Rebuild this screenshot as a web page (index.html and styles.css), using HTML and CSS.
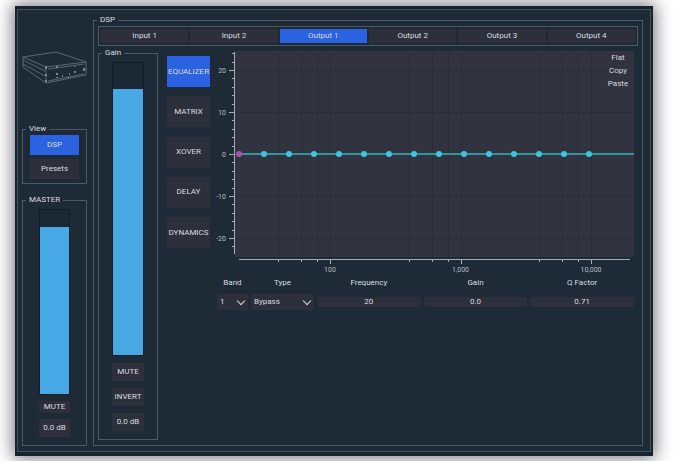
FILE: index.html
```html
<!DOCTYPE html>
<html lang="en">
<head>
  <meta charset="UTF-8">
  <meta name="viewport" content="width=device-width, initial-scale=1.0">
  <title>DSP</title>
  <link rel="stylesheet" href="styles.css">
</head>
<body>

  <div class="window">

    <!-- Left column -->
    <aside class="sidebar">
      <svg class="device" viewBox="0 0 65 34" aria-hidden="true">
        <path class="case" d="M1 6 L34 1 L64 11 L64 24 L24 32 L1 16 Z M1 6 L24 16 L64 11 M24 16 V32 M1 9 L23 20 M1 13 L23 25 M26 18 L62 13 M26 30 L62 23"/>
        <path class="knobs" d="M23 15h2v3h-2z M23 23h2v2h-2z M23 29h2v2h-2z M34 15h2v2h-2z M34 22h2v2h-2z M34 26h2v1h-2z M40 24h1v2h-1z M47 22h1v2h-1z M52 20h2v2h-2z M52 15h1v1h-1z M61 17h2v3h-2z M46 26h1v1h-1z"/>
      </svg>

      <fieldset class="panel view">
        <legend>View</legend>
        <button class="btn active">DSP</button>
        <button class="btn">Presets</button>
      </fieldset>

      <fieldset class="panel channel master">
        <legend>MASTER</legend>
        <input type="range" class="fader fader-master" min="0" max="100" value="91" aria-label="Master level">
        <button class="btn btn-low">MUTE</button>
        <button class="btn">0.0 dB</button>
      </fieldset>
    </aside>

    <!-- DSP -->
    <fieldset class="panel dsp">
      <legend>DSP</legend>

      <nav class="tabs">
        <button class="btn">Input 1</button>
        <button class="btn">Input 2</button>
        <button class="btn active">Output 1</button>
        <button class="btn">Output 2</button>
        <button class="btn">Output 3</button>
        <button class="btn">Output 4</button>
      </nav>

      <div class="content">
        <fieldset class="panel channel gain">
          <legend>Gain</legend>
          <input type="range" class="fader fader-gain" min="0" max="100" value="90" aria-label="Gain level">
          <button class="btn">MUTE</button>
          <button class="btn">INVERT</button>
          <button class="btn">0.0 dB</button>
        </fieldset>

        <nav class="modules">
          <button class="btn active">EQUALIZER</button>
          <button class="btn">MATRIX</button>
          <button class="btn">XOVER</button>
          <button class="btn">DELAY</button>
          <button class="btn">DYNAMICS</button>
        </nav>

        <main class="equalizer">
          <div class="chart">
            <svg id="curve" viewBox="0 0 424 228" role="img" aria-label="Equalizer curve">
              <rect class="plot" x="21" y="3" width="399" height="206"/>
            </svg>
            <div class="chart-menu">
              <button>Flat</button>
              <button>Copy</button>
              <button>Paste</button>
            </div>
          </div>

          <form class="band">
            <div class="field">
              <label for="band">Band</label>
              <div class="select">
                <select id="band"><option>1</option><option>2</option><option>3</option></select>
              </div>
            </div>
            <div class="field">
              <label for="type">Type</label>
              <div class="select">
                <select id="type"><option>Bypass</option><option>Peak</option></select>
              </div>
            </div>
            <div class="field">
              <label for="frequency">Frequency</label>
              <input type="text" id="frequency" value="20">
            </div>
            <div class="field">
              <label for="gain">Gain</label>
              <input type="text" id="gain" value="0.0">
            </div>
            <div class="field">
              <label for="q">Q Factor</label>
              <input type="text" id="q" value="0.71">
            </div>
          </form>
        </main>
      </div>
    </fieldset>

  </div>

  <script src="script.js"></script>
</body>
</html>
```
FILE: styles.css
```css
* { box-sizing: border-box; }
body { margin: 0; padding: 6px 23px 5px 15px; height: 100vh; min-height: 440px; background: #fff; font-family: Roboto, sans-serif; font-size: 8px; line-height: 10px; color: #d8dce0; }
button, input, select { font: inherit; color: inherit; margin: 0; padding: 0; border: none; border-radius: 0; }
button { cursor: pointer; }

.window { display: flex; gap: 6px; height: 100%; padding: 6px 8px 6px 5px; background: #1e2b37; border: solid #172430; border-width: 3px 2px 4px; box-shadow: inset 0 0 0 1px #44525d, 0 0 16px 2px rgba(40, 40, 55, 0.65); }

/* Panels */
.panel { --pad: 4px; display: flex; flex-direction: column; min-width: 0; margin: 0; padding: 0 var(--pad); border: 1px solid #4b5963; }
.panel legend { margin-left: calc(3px - var(--pad)); padding: 0 3px; height: 10px; }
.btn { background: #2d303b; }
.btn.active { background: #2a62e2; }

/* Sidebar */
.sidebar { display: flex; flex-direction: column; flex: 0 0 65px; min-width: 0; }
.device { flex: none; height: 34px; margin: 36px 0 39px; }
.case { fill: none; stroke: #687680; stroke-width: 0.8; stroke-linejoin: round; }
.knobs { fill: #788690; }
.view { --pad: 7px; gap: 4px; padding-top: 1px; padding-bottom: 4px; margin-bottom: 11px; }
.view .btn { height: 20px; }

/* Faders */
.channel { --pad: 13px; gap: 7px; padding-top: 4px; padding-bottom: 8px; }
.channel .btn { flex: none; height: 18px; white-space: nowrap; }
.master { --pad: 16px; flex: 1; gap: 6px; }
.channel .btn-low { height: 12px; }
.fader { -webkit-appearance: none; appearance: none; writing-mode: vertical-lr; direction: rtl; flex: 1; width: 100%; min-height: 0; border: 1px solid #121d27; }
.fader::-webkit-slider-thumb { -webkit-appearance: none; width: 1px; height: 1px; opacity: 0; }
.fader-master { background: linear-gradient(to top, #48a8e5 91%, #1c2934 91%); }
.fader-gain { background: linear-gradient(to top, #48a8e5 91%, #1c2934 91%); }

/* DSP */
.dsp { flex: 1; padding-top: 1px; padding-bottom: 5px; }
.tabs { display: flex; gap: 2px; height: 20px; padding: 2px; border: 1px solid #4b5963; }
.tabs .btn { flex: 1; }
.content { display: flex; flex: 1; min-height: 0; margin-top: 2px; }
.gain { flex: 0 0 60px; }
.modules { display: flex; flex-direction: column; justify-content: space-between; flex: 0 0 43px; height: 192px; margin: 8px 4px 0 9px; }
.modules .btn { height: 31px; }

/* Equalizer */
.equalizer { flex: 1; min-width: 0; }
.chart { position: relative; }
.chart svg { display: block; width: 100%; }
.plot { fill: #31333e; }
.grid { stroke: #282d38; stroke-width: 1; }
.axis { stroke: #a3abb3; stroke-width: 1; }
.curve { stroke: #32949f; stroke-width: 2; }
.point { fill: #3fc5e4; }
.point.selected { fill: #a256b4; }
.tick-label { fill: #b4bbc2; font-size: 7px; }
.chart-menu { position: absolute; top: 3px; right: 4px; display: flex; flex-direction: column; width: 32px; }
.chart-menu button { height: 13px; background: none; }

.band { display: grid; grid-template-columns: 31px 63px 1fr 1fr 1fr; gap: 3px; padding: 2px 4px 0 3px; }
.field { display: flex; flex-direction: column; gap: 6px; min-width: 0; text-align: center; }
.field input { width: 100%; height: 10px; margin: 3px 0; background: #2d303b; border-radius: 2px; text-align: center; }
.select { position: relative; }
.select select { -webkit-appearance: none; appearance: none; display: block; width: 100%; height: 16px; padding-left: 3px; background: #2d303b; border-radius: 2px; }
.select::after { content: ""; position: absolute; top: 4px; right: 4px; width: 5px; height: 5px; border: solid #d3d7dc; border-width: 0 1px 1px 0; transform: rotate(45deg); pointer-events: none; }
```
FILE: script.js
```js
const svg = document.getElementById('curve');
const xOf = f => 116 + 130.5 * Math.log10(f / 100);
const yOf = db => 106 - 4.2 * db;

function add(tag, className, attrs, text) {
  const el = document.createElementNS('http://www.w3.org/2000/svg', tag);
  el.setAttribute('class', className);
  for (const key in attrs) el.setAttribute(key, attrs[key]);
  if (text) el.textContent = text;
  svg.appendChild(el);
}

function line(className, x1, y1, x2, y2) {
  add('line', className, { x1, y1, x2, y2 });
}

// Frequency grid and axis
line('axis', 25, 211.5, 416, 211.5);
[100, 1000, 10000].forEach(decade => {
  [0.4, 0.6, 0.8, 1].forEach(step => {
    const x = Math.round(xOf(decade * step)) + 0.5;
    line('grid', x, 3, x, 209);
    line('axis', x, 212, x, step === 1 ? 216 : 214);
  });
  add('text', 'tick-label', { x: xOf(decade), y: 224, 'text-anchor': 'middle' }, decade === 100 ? '100' : decade.toLocaleString('en-US'));
});

// Level grid and axis
line('axis', 20.5, 4, 20.5, 206);
for (let db = -22; db <= 24; db += 2) {
  const y = Math.round(yOf(db)) + 0.5;
  const major = db % 10 === 0;
  line('axis', major ? 15 : 18, y, 20, y);
  if (major) {
    line('grid', 21, y, 420, y);
    add('text', 'tick-label', { x: 12, y: y + 2, 'text-anchor': 'end' }, String(db));
  }
}

// Bands
line('curve', 25, 106, 420, 106);
for (let i = 0; i < 15; i++) {
  add('circle', i === 0 ? 'point selected' : 'point', { cx: 25 + i * 25, cy: 106, r: 3 });
}
```
